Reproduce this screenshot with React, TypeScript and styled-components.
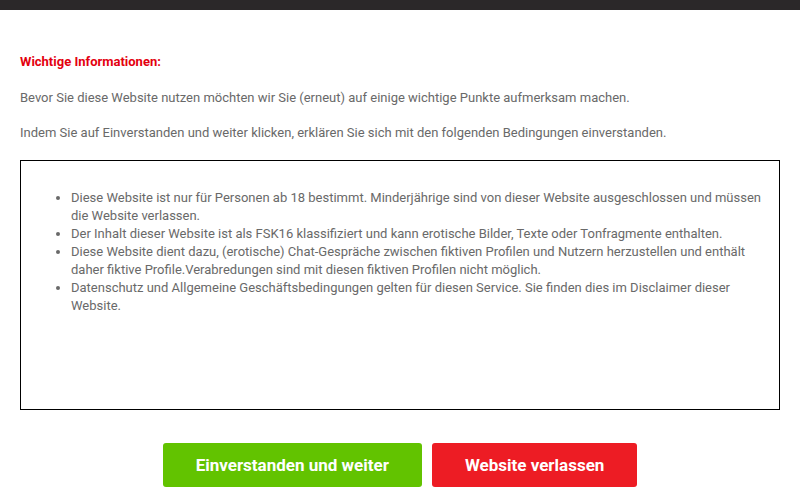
import React from 'react';
import styled, { createGlobalStyle } from 'styled-components';

const GlobalStyle = createGlobalStyle`
    *, *::before, *::after {
        box-sizing: border-box;
    }
    html, body {
        margin: 0;
        padding: 0;
        background: #fff;
    }
    body {
        font-family: Roboto, "Liberation Sans", Arial, sans-serif;
        color: #696969;
    }
`;

const TopBar = styled.div`
    height: 10px;
    background: #2b2829;
`;

const Content = styled.main`
    padding: 43px 20px 0;
`;

const Heading = styled.h2`
    margin: 0 0 18px;
    font-size: 13px;
    line-height: 18px;
    font-weight: bold;
    color: #e3000f;
`;

const Paragraph = styled.p`
    margin: 0 0 17px;
    font-size: 13px;
    line-height: 18px;
`;

const TermsBox = styled.div`
    margin-top: 18px;
    height: 250px;
    border: 1px solid #000;
    padding: 28px 8px 0 0;
`;

const List = styled.ul`
    margin: 0;
    padding-left: 50px;
    list-style: disc;
`;

const Item = styled.li`
    font-size: 13px;
    line-height: 18px;
`;

const Actions = styled.div`
    display: flex;
    justify-content: center;
    gap: 10px;
    margin-top: 33px;
`;

const Button = styled.button<{ $variant: 'accept' | 'leave' }>`
    height: 44px;
    padding: 0 33px;
    border: none;
    border-radius: 3px;
    background: ${(p) => (p.$variant === 'accept' ? '#62c300' : '#ed1c24')};
    color: #fff;
    font-family: Roboto, "Liberation Sans", Arial, sans-serif;
    font-size: 17px;
    font-weight: bold;
    cursor: pointer;
`;

const terms = [
    'Diese Website ist nur für Personen ab 18 bestimmt. Minderjährige sind von dieser Website ausgeschlossen und müssen die Website verlassen.',
    'Der Inhalt dieser Website ist als FSK16 klassifiziert und kann erotische Bilder, Texte oder Tonfragmente enthalten.',
    'Diese Website dient dazu, (erotische) Chat-Gespräche zwischen fiktiven Profilen und Nutzern herzustellen und enthält daher fiktive Profile.Verabredungen sind mit diesen fiktiven Profilen nicht möglich.',
    'Datenschutz und Allgemeine Geschäftsbedingungen gelten für diesen Service. Sie finden dies im Disclaimer dieser Website.',
];

export default function App() {
    return (
        <>
            <GlobalStyle />
            <TopBar />
            <Content>
                <Heading>Wichtige Informationen:</Heading>
                <Paragraph>
                    Bevor Sie diese Website nutzen möchten wir Sie (erneut) auf einige wichtige Punkte aufmerksam machen.
                </Paragraph>
                <Paragraph>
                    Indem Sie auf Einverstanden und weiter klicken, erklären Sie sich mit den folgenden Bedingungen einverstanden.
                </Paragraph>
                <TermsBox>
                    <List>
                        {terms.map((t) => (
                            <Item key={t}>{t}</Item>
                        ))}
                    </List>
                </TermsBox>
                <Actions>
                    <Button $variant="accept">Einverstanden und weiter</Button>
                    <Button $variant="leave">Website verlassen</Button>
                </Actions>
            </Content>
        </>
    );
}
